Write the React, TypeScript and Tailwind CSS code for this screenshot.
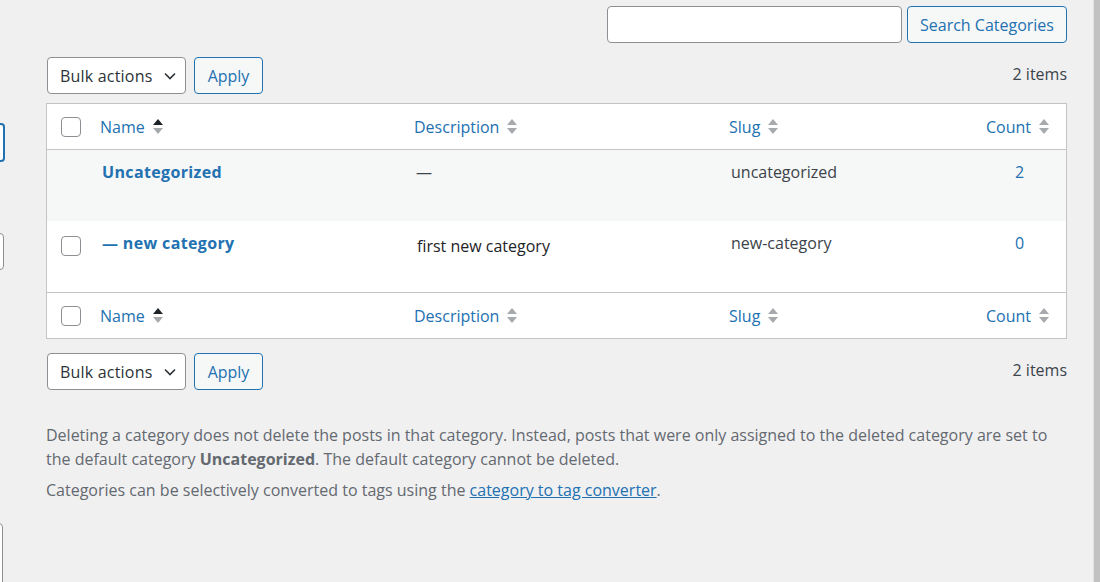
import React from "react";

function SortIcon({ activeUp = false }: { activeUp?: boolean }) {
  return (
    <svg width="10" height="18" viewBox="0 0 10 18" className="shrink-0">
      <polygon points="5,1 10,7 0,7" fill={activeUp ? "#1d2327" : "#a7aaad"} />
      <polygon points="0,10 10,10 5,16" fill="#a7aaad" />
    </svg>
  );
}

function Checkbox() {
  return <span className="block w-[20px] h-[20px] rounded-[4px] border border-[#8c8f94] bg-white" />;
}

function BulkRow({ top }: { top: string }) {
  return (
    <div className={`flex items-center h-[37px] ${top}`}>
      <div className="ml-[1px] flex items-center justify-between w-[139px] h-[37px] pl-[12px] pr-[8px] border border-[#8c8f94] rounded-[4px] bg-white text-[16px] text-[#2c3338]">
        <span className="tracking-[0.2px]">Bulk actions</span>
        <svg width="14" height="14" viewBox="0 0 14 14" fill="none">
          <path d="M2 4.5 L7 9.5 L12 4.5" stroke="#2c3338" strokeWidth="1.6" />
        </svg>
      </div>
      <button className="ml-[8px] w-[69px] h-[37px] border border-[#2271b1] rounded-[4px] bg-[#f6f7f7] text-[16px] text-[#2271b1]">
        Apply
      </button>
      <span className="ml-auto text-[16px] text-[#3c434a] -mt-[3px]">2 items</span>
    </div>
  );
}

function HeaderRow({ border }: { border: string }) {
  return (
    <div className={`grid grid-cols-[43px_314px_315px_250px_1fr] h-[46px] items-center ${border} border-[#c3c4c7]`}>
      <div className="pl-[14px]">
        <Checkbox />
      </div>
      <div className="flex items-center gap-[8px] px-[10px] text-[#2271b1]">
        <span>Name</span>
        <SortIcon activeUp />
      </div>
      <div className="flex items-center gap-[8px] px-[10px] text-[#2271b1]">
        <span>Description</span>
        <SortIcon />
      </div>
      <div className="flex items-center gap-[8px] px-[10px] text-[#2271b1]">
        <span>Slug</span>
        <SortIcon />
      </div>
      <div className="flex items-center justify-center gap-[8px] text-[#2271b1]">
        <span>Count</span>
        <SortIcon />
      </div>
    </div>
  );
}

export default function App() {
  return (
    <div
      className="flex w-[1100px] h-[582px] overflow-hidden bg-[#f0f0f1] text-[16px] leading-[24px] text-[#3c434a]"
      style={{ fontFamily: '"Open Sans", sans-serif' }}
    >
      {/* left form column, mostly cut off */}
      <div className="flex flex-col w-[6px] shrink-0 overflow-hidden">
        <div className="mt-[123px] ml-[-195px] w-[200px] h-[39px] shrink-0 rounded-[4px] border-2 border-[#2271b1] bg-white" />
        <div className="mt-[71px] ml-[-196px] w-[200px] h-[37px] shrink-0 rounded-[4px] border border-[#8c8f94] bg-white" />
        <div className="mt-[253px] ml-[-197px] w-[200px] h-[120px] shrink-0 rounded-[4px] border border-[#8c8f94] bg-white" />
      </div>

      {/* main column */}
      <div className="ml-[40px] w-[1021px] shrink-0 flex flex-col">
        <div className="flex justify-end items-center mt-[6px] h-[37px] gap-[5px]">
          <div className="w-[295px] h-[37px] rounded-[4px] border border-[#8c8f94] bg-white" />
          <button className="w-[160px] h-[37px] rounded-[4px] border border-[#2271b1] bg-[#f6f7f7] text-[16px] text-[#2271b1]">
            Search Categories
          </button>
        </div>

        <BulkRow top="mt-[14px]" />

        <div className="mt-[9px] border border-[#c3c4c7] bg-white">
          <HeaderRow border="border-b" />
          <div className="grid grid-cols-[43px_314px_315px_250px_1fr] h-[71px] bg-[#f6f7f7] pt-[10px]">
            <div />
            <div className="px-[12px] font-bold tracking-[0.35px] text-[#2271b1]">Uncategorized</div>
            <div className="px-[12px]">—</div>
            <div className="px-[12px]">uncategorized</div>
            <div className="text-center text-[#2271b1] pl-[4px]">2</div>
          </div>
          <div className="grid grid-cols-[43px_314px_315px_250px_1fr] h-[71px] pt-[10px]">
            <div className="pl-[14px] pt-[5px]">
              <Checkbox />
            </div>
            <div className="px-[12px] font-bold tracking-[0.35px] text-[#2271b1]">— new category</div>
            <div className="px-[13px] pt-[3px] text-[#1d2327]">first new category</div>
            <div className="px-[12px]">new-category</div>
            <div className="text-center text-[#2271b1] pl-[4px]">0</div>
          </div>
          <HeaderRow border="border-t" />
        </div>

        <BulkRow top="mt-[14px]" />

        <p className="mt-[33px] text-[#646970]">
          Deleting a category does not delete the posts in that category. Instead, posts that were only assigned to the
          deleted category are set to the default category <strong className="font-bold">Uncategorized</strong>. The
          default category cannot be deleted.
        </p>
        <p className="mt-[7px] text-[#646970]">
          Categories can be selectively converted to tags using the{" "}
          <a className="text-[#2271b1] underline">category to tag converter</a>.
        </p>
      </div>

      {/* page scrollbar */}
      <div className="ml-auto w-[7px] h-full border-l border-[#e3e3e3] bg-[#c2c2c2]" />
    </div>
  );
}
